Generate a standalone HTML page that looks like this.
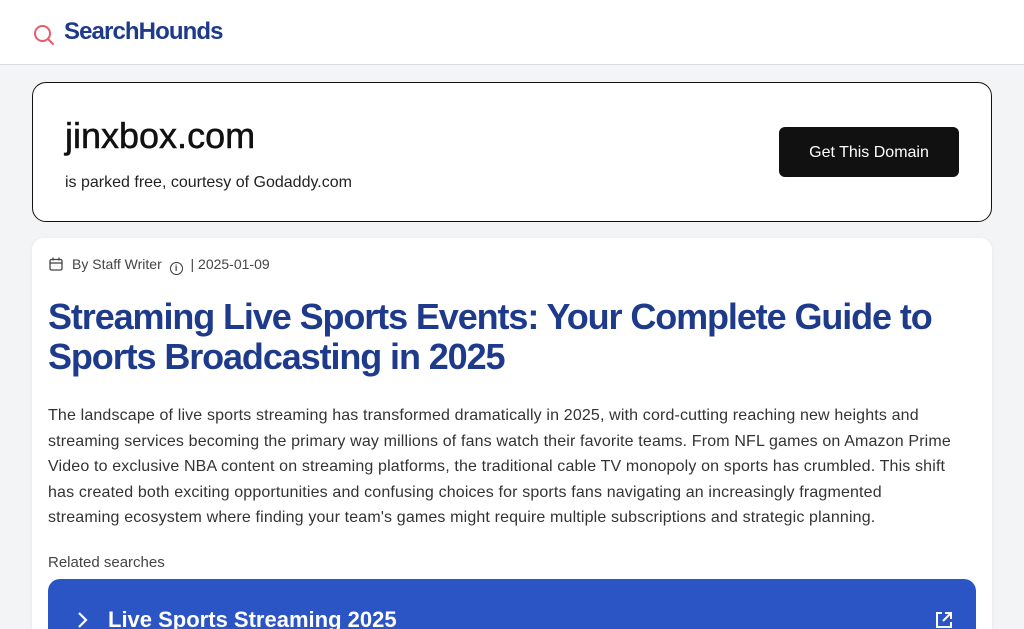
<!DOCTYPE html>
<html><head><meta charset="utf-8"><style>
*{margin:0;padding:0;box-sizing:border-box}
html,body{width:1024px;height:629px;overflow:hidden}
body{background:#f3f4f6;font-family:"Liberation Sans",sans-serif;position:relative}
.hdr{position:absolute;left:0;top:0;width:1024px;height:65px;background:#fff;border-bottom:1px solid #d8dbe0}
.logo{position:absolute;left:64px;top:18px;font-weight:bold;font-size:24px;color:#1e3a8a;letter-spacing:-0.9px}
.park{position:absolute;left:32px;top:82px;width:960px;height:140px;background:#fff;border:1px solid #111;border-radius:14px}
.dom{position:absolute;left:32px;top:32px;font-size:36px;color:#111;-webkit-text-stroke:0.5px #111}
.sub{position:absolute;left:32px;top:91px;font-size:16px;color:#222}
.btn{position:absolute;left:746px;top:44px;width:180px;height:50px;background:#111;color:#fff;border-radius:6px;font-size:16px;text-align:center;line-height:52px}
.card{position:absolute;left:32px;top:238px;width:960px;height:420px;background:#fff;border-radius:12px;box-shadow:0 1px 4px rgba(0,0,0,.06)}
.meta{position:absolute;left:40px;top:18px;font-size:14px;color:#444}
h1{position:absolute;left:16px;top:59px;width:940px;font-size:36px;line-height:40px;color:#1e3a8a;font-weight:bold;letter-spacing:-1.1px;white-space:nowrap}
.p{position:absolute;left:16px;top:165px;font-size:16px;line-height:25.6px;color:#333;white-space:nowrap;letter-spacing:0.15px}
.rel{position:absolute;left:16px;top:316px;font-size:15px;color:#444}
.bar{position:absolute;left:16px;top:341px;width:928px;height:70px;background:#2b55c4;border-radius:12px}
.bt{position:absolute;left:60px;top:28px;color:#fff;font-weight:bold;font-size:22px}
</style></head><body>
<div class="hdr">
<svg style="position:absolute;left:33px;top:24px" width="22" height="22" viewBox="0 0 22 22"><circle cx="9.5" cy="9.5" r="7.5" fill="none" stroke="#e85d6a" stroke-width="2"/><line x1="15" y1="15" x2="20" y2="20" stroke="#e85d6a" stroke-width="2" stroke-linecap="round"/></svg>
<div class="logo">SearchHounds</div></div>
<div class="park"><div class="dom">jinxbox.com</div><div class="sub">is parked free, courtesy of Godaddy.com</div><div class="btn">Get This Domain</div></div>
<div class="card">
<svg style="position:absolute;left:17px;top:19px" width="14" height="14" viewBox="0 0 14 14" fill="none" stroke="#444" stroke-width="1.3"><rect x="1" y="2.5" width="12" height="10.5" rx="1.5"/><line x1="1" y1="6" x2="13" y2="6"/><line x1="4" y1="0.5" x2="4" y2="3.5"/><line x1="10" y1="0.5" x2="10" y2="3.5"/></svg>
<div class="meta">By Staff Writer <span style="display:inline-block;width:13px;height:13px;border:1.3px solid #333;border-radius:50%;font-size:9px;text-align:center;line-height:11px;vertical-align:-2px;margin:0 4px;font-weight:bold">i</span> | 2025-01-09</div>
<h1>Streaming Live Sports Events: Your Complete Guide to<br>Sports Broadcasting in 2025</h1>
<div class="p">The landscape of live sports streaming has transformed dramatically in 2025, with cord-cutting reaching new heights and<br>streaming services becoming the primary way millions of fans watch their favorite teams. From NFL games on Amazon Prime<br>Video to exclusive NBA content on streaming platforms, the traditional cable TV monopoly on sports has crumbled. This shift<br>has created both exciting opportunities and confusing choices for sports fans navigating an increasingly fragmented<br>streaming ecosystem where finding your team's games might require multiple subscriptions and strategic planning.</div>
<div class="rel">Related searches</div>
<div class="bar"><svg style="position:absolute;left:28px;top:31px" width="12" height="20" viewBox="0 0 12 20"><path d="M3 3l7 7-7 7" fill="none" stroke="#fff" stroke-width="2.2"/></svg><div class="bt">Live Sports Streaming 2025</div>
<svg style="position:absolute;left:886px;top:31px" width="20" height="20" viewBox="0 0 20 20" fill="none" stroke="#fff" stroke-width="2"><path d="M8 3H3v14h14v-5M11 3h6v6M17 3l-8 8"/></svg></div>
</div>
</body></html>
